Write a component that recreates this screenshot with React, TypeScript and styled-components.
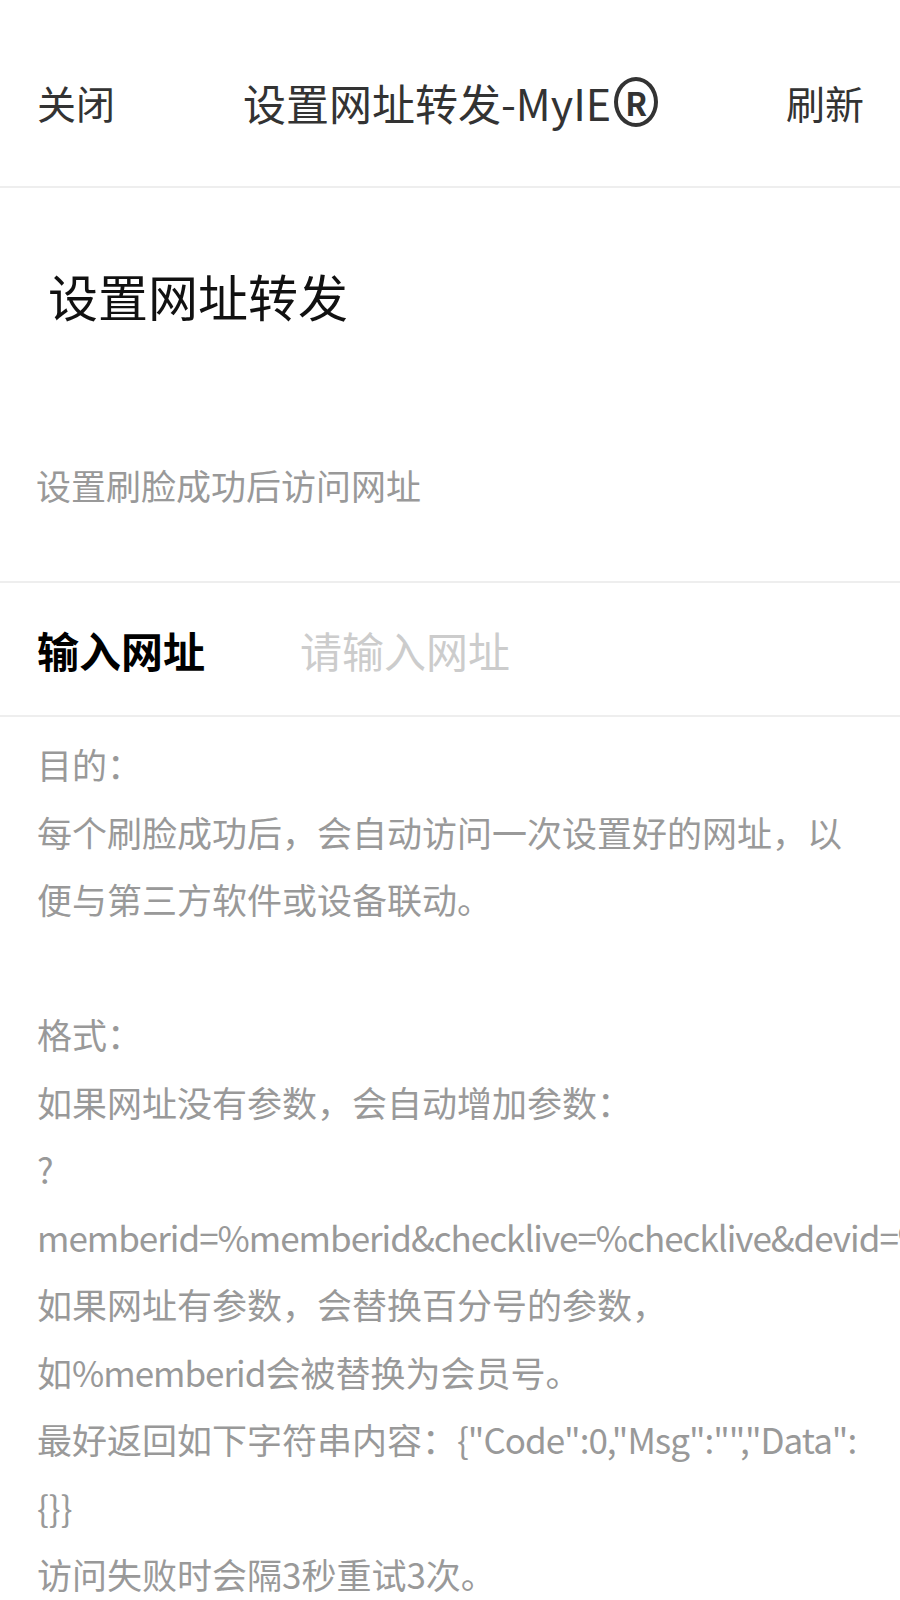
import styled, { createGlobalStyle } from "styled-components";

const GlobalStyle = createGlobalStyle`
  html, body {
    margin: 0;
    padding: 0;
    background: #ffffff;
  }
  body {
    font-family: "Noto Sans CJK SC", "Noto Sans", sans-serif;
  }
  * {
    box-sizing: border-box;
  }
`;

const Page = styled.div`
  width: 900px;
  min-height: 1600px;
  background: #ffffff;
  overflow: hidden;
`;

const NavBar = styled.header`
  height: 188px;
  display: grid;
  grid-template-columns: 1fr auto 1fr;
  align-items: center;
  padding: 18px 36px 0 37px;
  border-bottom: 2px solid #eeeeee;
`;

const NavButton = styled.button<{ $right?: boolean }>`
  justify-self: ${(props) => (props.$right ? "end" : "start")};
  border: none;
  background: none;
  padding: 0;
  font-family: inherit;
  font-size: 39px;
  color: #333333;
  cursor: pointer;
`;

const NavTitle = styled.div`
  display: flex;
  align-items: center;
  font-size: 43px;
  color: #333333;
  white-space: nowrap;
`;

const Registered = styled.span`
  display: inline-flex;
  align-items: center;
  justify-content: center;
  width: 44px;
  height: 50px;
  margin-left: 3px;
  border: 4px solid #333333;
  border-radius: 50%;
  font-size: 32px;
  font-weight: 700;
  line-height: 1;
`;

const TitleBlock = styled.section`
  padding: 77px 36px 71px;
  border-bottom: 2px solid #eeeeee;
`;

const Heading = styled.h1`
  margin: 0 0 0 12px;
  font-size: 50px;
  font-weight: 400;
  line-height: 60px;
  color: #111111;
`;

const Subtitle = styled.p`
  margin: 135px 0 0;
  font-size: 35px;
  line-height: 50px;
  color: #999999;
`;

const InputRow = styled.label`
  height: 134px;
  display: flex;
  align-items: center;
  padding: 0 36px 0 37px;
  border-bottom: 2px solid #eeeeee;
`;

const FieldLabel = styled.span`
  width: 263px;
  flex-shrink: 0;
  font-size: 42px;
  font-weight: 700;
  color: #000000;
`;

const FieldInput = styled.input`
  flex: 1;
  min-width: 0;
  border: none;
  outline: none;
  padding: 0;
  font-family: inherit;
  font-size: 42px;
  color: #333333;
  background: transparent;
  &::placeholder {
    color: #cccccc;
  }
`;

const Notes = styled.div`
  padding: 13px 36px 0 37px;
`;

const NoteLine = styled.div`
  font-size: 35px;
  line-height: 67.5px;
  height: 67.5px;
  color: #999999;
  white-space: nowrap;
`;

// latin runs in the reference font are a little narrower
const Latin = styled.span`
  letter-spacing: -1px;
`;

const notes: (string | [string, string, string])[] = [
  "目的：",
  "每个刷脸成功后，会自动访问一次设置好的网址，以",
  "便与第三方软件或设备联动。",
  "",
  "格式：",
  "如果网址没有参数，会自动增加参数：",
  "?",
  ["", "memberid=%memberid&checklive=%checklive&devid=%devid", ""],
  "如果网址有参数，会替换百分号的参数，",
  ["如", "%memberid", "会被替换为会员号。"],
  ["最好返回如下字符串内容：", '{"Code":0,"Msg":"","Data":', ""],
  "{}}",
  "访问失败时会隔3秒重试3次。",
];

function App() {
  return (
    <>
      <GlobalStyle />
      <Page>
        <NavBar>
          <NavButton>关闭</NavButton>
          <NavTitle>
            设置网址转发-MyIE<Registered>R</Registered>
          </NavTitle>
          <NavButton $right>刷新</NavButton>
        </NavBar>
        <TitleBlock>
          <Heading>设置网址转发</Heading>
          <Subtitle>设置刷脸成功后访问网址</Subtitle>
        </TitleBlock>
        <InputRow>
          <FieldLabel>输入网址</FieldLabel>
          <FieldInput placeholder="请输入网址" />
        </InputRow>
        <Notes>
          {notes.map((line, i) =>
            typeof line === "string" ? (
              <NoteLine key={i}>{line}</NoteLine>
            ) : (
              <NoteLine key={i}>
                {line[0]}
                <Latin>{line[1]}</Latin>
                {line[2]}
              </NoteLine>
            )
          )}
        </Notes>
      </Page>
    </>
  );
}

export default App;
